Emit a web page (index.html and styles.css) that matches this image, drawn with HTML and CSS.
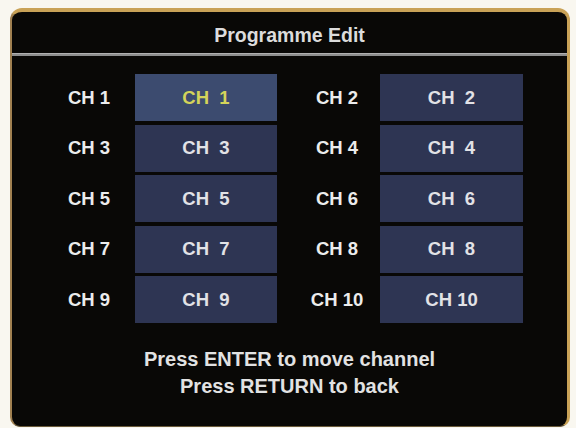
FILE: index.html
```html
<!DOCTYPE html>
<html>
<head>
<meta charset="utf-8">
<link rel="stylesheet" href="styles.css">
</head>
<body>
<div class="frame">
  <div class="header">Programme Edit</div>
  <div class="sep"></div>
  <div class="grid">
    <div class="lbl">CH 1</div><div class="box sel">CH  1</div><div class="lbl r">CH 2</div><div class="box">CH  2</div>
    <div class="lbl">CH 3</div><div class="box">CH  3</div><div class="lbl r">CH 4</div><div class="box">CH  4</div>
    <div class="lbl">CH 5</div><div class="box">CH  5</div><div class="lbl r">CH 6</div><div class="box">CH  6</div>
    <div class="lbl">CH 7</div><div class="box">CH  7</div><div class="lbl r">CH 8</div><div class="box">CH  8</div>
    <div class="lbl">CH 9</div><div class="box">CH  9</div><div class="lbl r">CH 10</div><div class="box">CH 10</div>
  </div>
  <div class="footer">
    <div>Press ENTER to move channel</div>
    <div>Press RETURN to back</div>
  </div>
</div>
</body>
</html>
```
FILE: styles.css
```css
html, body {
  margin: 0;
  padding: 0;
  background: #f9f7f0;
  width: 576px;
  height: 428px;
  overflow: hidden;
}
body {
  font-family: "Liberation Sans", Arial, sans-serif;
  font-weight: bold;
  color: #e6e6e6;
}
.frame {
  margin: 8px 0 0 10px;
  width: 560px;
  height: 419px;
  background: #090806;
  border-top: 4px solid #c9a257;
  border-left: 2px solid #a08050;
  border-right: 3px solid #c9a257;
  border-bottom: 1px solid #6a5a3a;
  border-radius: 12px 12px 10px 10px;
  box-sizing: border-box;
}
.header {
  height: 41px;
  padding-top: 5px;
  box-sizing: border-box;
  line-height: 36px;
  text-align: center;
  font-size: 19.5px;
  color: #dcdcdc;
}
.sep {
  height: 3px;
  background: #8e8e8e;
  border-top: 1px solid #b0b0b0;
  box-sizing: border-box;
}
.grid {
  margin: 18px 0 0 31px;
  display: grid;
  grid-template-columns: 92px 142px 103px 143px;
  grid-auto-rows: 47px;
  row-gap: 3.5px;
  font-size: 18.5px;
}
.lbl {
  display: flex;
  align-items: center;
  justify-content: center;
  color: #ececec;
}
.lbl.r {
  padding-left: 17px;
}
.box {
  display: flex;
  align-items: center;
  justify-content: center;
  background: #2e3553;
  white-space: pre;
  color: #e2e2e6;
}
.box.sel {
  background: #3c4b6f;
  color: #d4d45a;
}
.footer {
  margin-top: 23px;
  text-align: center;
  font-size: 20px;
  line-height: 27px;
  color: #e2e2e2;
}
```
